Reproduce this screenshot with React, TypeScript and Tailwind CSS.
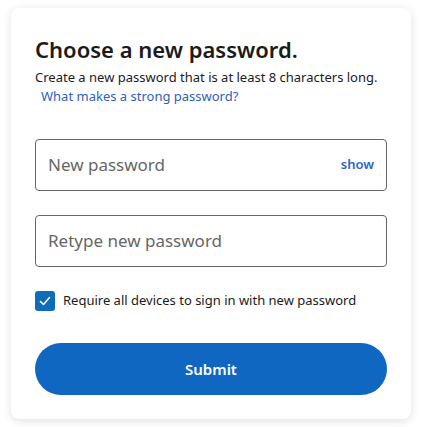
export default function App() {
  return (
    <div
      className="min-h-screen bg-white pt-2 pl-[11px]"
      style={{ fontFamily: '"Noto Sans", "Open Sans", sans-serif' }}
    >
      <div className="w-[400px] rounded-lg bg-white px-6 pt-[27px] pb-[24px] shadow-[0_2px_10px_rgba(0,0,0,0.12)]">
        <h1 className="text-[22px] leading-[28px] font-semibold text-[#1b1b1b]">
          Choose a new password.
        </h1>
        <p className="mt-[5px] text-[13px] leading-[19px] text-[#1b1b1b]">
          Create a new password that is at least 8 characters long.
        </p>
        <a href="#" className="ml-[6px] block text-[13px] leading-[19px] text-[#2f5fc0]">
          What makes a strong password?
        </a>

        <div className="mt-[33px] flex h-[52px] items-center rounded-[4px] border border-[#666] px-3">
          <span className="flex-1 text-[17px] text-[#666]">New password</span>
          <span className="text-[13px] font-semibold text-[#2b65c7]">show</span>
        </div>

        <div className="mt-6 flex h-[52px] items-center rounded-[4px] border border-[#666] px-3">
          <span className="flex-1 text-[17px] text-[#666]">Retype new password</span>
        </div>

        <label className="mt-[24px] flex items-center gap-2">
          <span className="flex h-5 w-5 items-center justify-center rounded-[3px] bg-[#0f6cb8]">
            <svg width="14" height="14" viewBox="0 0 14 14" fill="none">
              <path d="M2.5 7.5 L5.5 10.5 L11.5 3.5" stroke="white" strokeWidth="1.6" strokeLinecap="round" strokeLinejoin="round" />
            </svg>
          </span>
          <span className="text-[13px] text-[#1b1b1b]">Require all devices to sign in with new password</span>
        </label>

        <button className="mt-[32px] h-[52px] w-full rounded-full bg-[#0f67c2] text-[15px] font-semibold text-white">
          Submit
        </button>
      </div>
    </div>
  );
}
